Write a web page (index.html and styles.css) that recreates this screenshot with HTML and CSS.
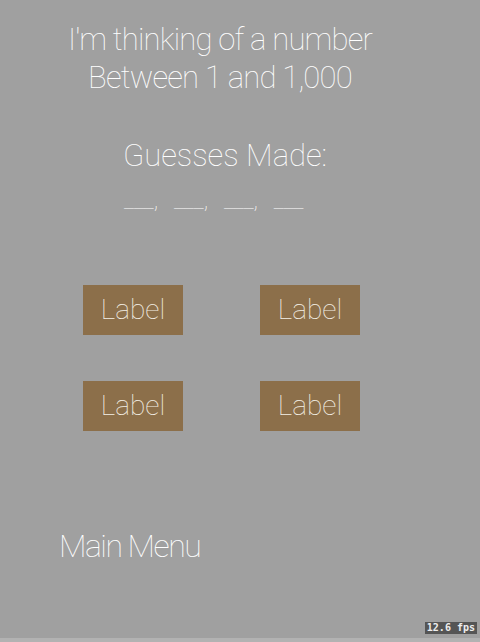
FILE: index.html
```html
<!DOCTYPE html>
<html lang="en">
<head>
    <meta charset="UTF-8">
    <meta name="viewport" content="width=device-width, initial-scale=1.0">
    <title>Guess the Number</title>
    <link rel="stylesheet" href="styles.css">
</head>
<body>
    <div class="game_screen">
        <div class="intro">
            <p>I'm thinking of a number</p>
            <p>Between 1 and 1,000</p>
        </div>
        <div class="guesses">
            <h2>Guesses Made:</h2>
            <p class="slots">___, ___, ___, ___</p>
        </div>
        <ul class="choices">
            <li><a href="#" class="choice">Label</a></li>
            <li><a href="#" class="choice">Label</a></li>
            <li><a href="#" class="choice">Label</a></li>
            <li><a href="#" class="choice">Label</a></li>
        </ul>
        <a href="#" class="main_menu">Main Menu</a>
        <span class="fps">12.6 fps</span>
    </div>
    <div class="bottom_strip"></div>
</body>
</html>
```

FILE: styles.css
```css
*{margin:0; padding:0;}
li{list-style: none;}
a{text-decoration: none; color: inherit;}
html, body{background:#a0a0a0;}
body{font-family: Roboto, "Liberation Sans", sans-serif; font-weight:100; color:#fff; width:480px; height:642px; overflow:hidden;}

.game_screen{position:relative; height:638px; background:#a0a0a0;}
.bottom_strip{height:4px; background:#b2b2b2;}

.intro{width:440px; padding-top:21px; text-align:center; font-size:31px; line-height:38px; letter-spacing:-0.8px;}

.guesses{margin-top:41px;}
.guesses h2{width:450px; text-align:center; font-size:31px; line-height:36px; font-weight:100;}
.guesses .slots{margin-top:13px; padding-left:124px; font-size:24px; line-height:26px; word-spacing:10px;}

.choices{display:grid; grid-template-columns:100px 100px; column-gap:77px; row-gap:46px; margin-top:72px; padding-left:83px;}
.choices .choice{display:block; width:100px; height:50px; line-height:50px; text-align:center; font-size:28px; background:#8c6f4a; color:#f4efe6;}

.main_menu{display:block; margin-top:95px; padding-left:59px; font-size:32px; line-height:40px; letter-spacing:-1.5px;}

.fps{position:absolute; right:3px; bottom:4px; padding:0 2px; background:#555; color:#eee; font:bold 10px/12px "DejaVu Sans Mono", monospace;}
```
